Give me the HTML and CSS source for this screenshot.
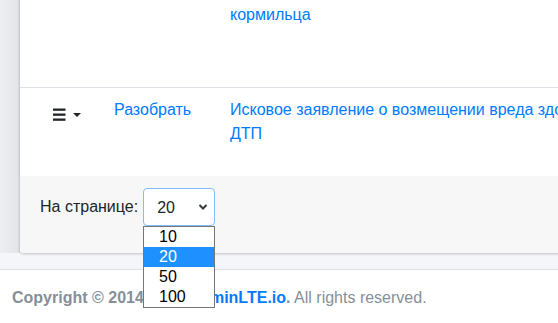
FILE: index.html
```html
<!DOCTYPE html>
<html lang="ru">

<head>
    <meta charset="UTF-8">
    <meta name="viewport" content="width=device-width, initial-scale=1.0">
    <title>Документы</title>
    <link rel="stylesheet" href="styles.css">
</head>

<body>

    <div class="content-wrapper">
        <div class="sidebar-edge"></div>

        <div class="card">
            <!-- document rows -->
            <div class="doc-row row-first">
                <div class="cell cell-actions"></div>
                <div class="cell cell-link"></div>
                <div class="cell cell-title">
                    <a href="#">Исковое заявление о взыскании ущерба по потере кормильца</a>
                </div>
            </div>

            <div class="doc-row row-second">
                <div class="cell cell-actions">
                    <button class="menu-toggle" type="button">
                        <svg width="13" height="13" viewBox="0 0 13 13">
                            <rect x="0" y="0.5" width="12.5" height="2.3" fill="#212529"/>
                            <rect x="0" y="5.5" width="12.5" height="2.3" fill="#212529"/>
                            <rect x="0" y="10.5" width="12.5" height="2.3" fill="#212529"/>
                        </svg>
                        <span class="caret"></span>
                    </button>
                </div>
                <div class="cell cell-link"><a href="#">Разобрать</a></div>
                <div class="cell cell-title">
                    <a href="#">Исковое заявление о возмещении вреда здоровью при ДТП</a>
                </div>
            </div>

            <div class="card-footer">
                <div class="form-group">
                    <label for="per-page">На странице:</label>
                    <div class="select-wrap">
                        <select id="per-page" class="custom-select">
                            <option>10</option>
                            <option selected>20</option>
                            <option>50</option>
                            <option>100</option>
                        </select>
                        <svg class="chevron" width="10" height="8" viewBox="0 0 10 8">
                            <path d="M1.5 2 L5 5.5 L8.5 2" fill="none" stroke="#343a40" stroke-width="2"/>
                        </svg>
                    </div>
                </div>
            </div>
        </div>
    </div>

    <footer class="main-footer">
        <strong>Copyright &copy; 2014-2019 <a href="#">AdminLTE.io</a>.</strong> All rights reserved.
    </footer>

    <!-- open list of the select -->
    <ul class="select-popup">
        <li>10</li>
        <li class="active">20</li>
        <li>50</li>
        <li>100</li>
    </ul>

</body>

</html>
```

FILE: styles.css
```css
html,
body {
    margin: 0;
    height: 100%;
    overflow: hidden;
}

body {
    position: relative;
    font-family: "Liberation Sans", Arial, sans-serif;
    font-size: 16px;
    line-height: 1.5;
    color: #212529;
    background: #f4f6f9;
}

a {
    color: #007bff;
    text-decoration: none;
}

.content-wrapper {
    display: flex;
    margin-top: -31px;
    margin-bottom: 16px;
    width: 900px;
}

.sidebar-edge {
    width: 20px;
    flex: none;
    background: linear-gradient(to right, #eceef1, #e4e6ea 85%, #dcdee2);
}

.card {
    width: 860px;
    background: #fff;
    border-radius: 0 0 4px 4px;
    box-shadow: 0 0 1px rgba(0, 0, 0, .125), 0 1px 3px rgba(0, 0, 0, .2);
}

.doc-row {
    display: flex;
    box-sizing: border-box;
}

.row-first {
    height: 118px;
}

.row-second {
    height: 89px;
    border-top: 1px solid #dee2e6;
}

.cell {
    box-sizing: border-box;
    padding: 10px 12px;
}

.cell-actions {
    width: 82px;
    padding-left: 32px;
}

.cell-link {
    width: 116px;
}

.cell-title {
    width: 444px;
}

.menu-toggle {
    display: flex;
    align-items: center;
    gap: 7px;
    margin: 10px 0 0 1px;
    padding: 0;
    border: 0;
    background: none;
}

.menu-toggle svg {
    display: block;
}

.caret {
    width: 0;
    height: 0;
    border-left: 4px solid transparent;
    border-right: 4px solid transparent;
    border-top: 4px solid #212529;
}

.card-footer {
    padding: 12px 20px 11px;
    background: #f7f7f7;
    border-radius: 0 0 4px 4px;
}

.form-group {
    display: flex;
    align-items: center;
    gap: 5px;
    margin-bottom: 16px;
}

.select-wrap {
    position: relative;
}

.custom-select {
    display: block;
    width: 72px;
    height: 38px;
    padding: 6px 28px 6px 13px;
    font-family: inherit;
    font-size: 16px;
    color: #212529;
    background: #fff;
    border: 1px solid #80bdff;
    border-radius: 4px;
    appearance: none;
    -webkit-appearance: none;
    outline: none;
}

.chevron {
    position: absolute;
    right: 7px;
    top: 15px;
}

.main-footer {
    padding: 16px 12px;
    color: #869099;
    background: #fff;
    border-top: 1px solid #dee2e6;
}

.select-popup {
    position: absolute;
    left: 143px;
    top: 226px;
    width: 70px;
    margin: 0;
    padding: 0;
    list-style: none;
    background: #fff;
    border: 1px solid #767676;
    color: #000;
    font-size: 16px;
    line-height: 20px;
}

.select-popup li {
    padding-left: 15px;
}

.select-popup .active {
    background: #1e90ff;
    color: #fff;
}
```
